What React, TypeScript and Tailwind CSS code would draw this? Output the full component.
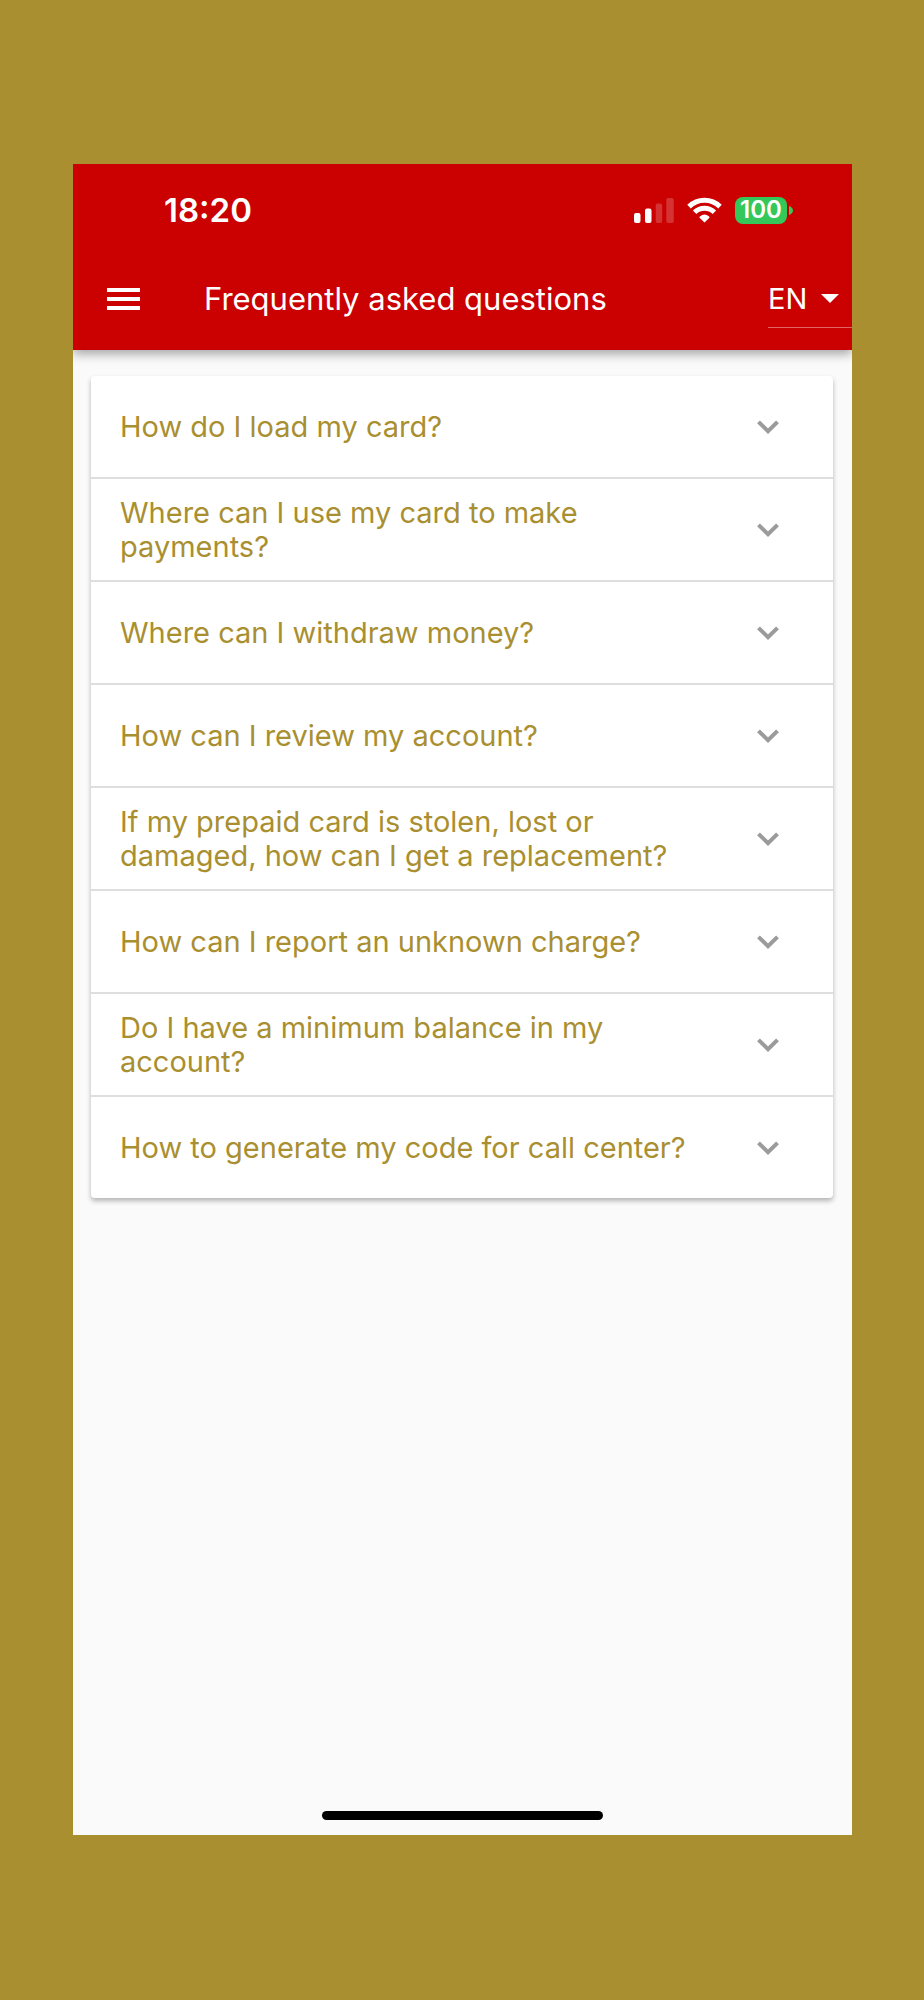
const questions = [
  'How do I load my card?',
  'Where can I use my card to make payments?',
  'Where can I withdraw money?',
  'How can I review my account?',
  'If my prepaid card is stolen, lost or damaged, how can I get a replacement?',
  'How can I report an unknown charge?',
  'Do I have a minimum balance in my account?',
  'How to generate my code for call center?',
];

function SignalIcon() {
  return (
    <svg width="40" height="25" viewBox="0 0 40 25" fill="#fff" aria-hidden="true">
      <rect x="0" y="15" width="6.5" height="10" rx="2" />
      <rect x="11" y="10.5" width="6.5" height="14.5" rx="2" />
      <rect x="21.7" y="5.5" width="6.5" height="19.5" rx="2" opacity="0.2" />
      <rect x="32.3" y="0" width="7.5" height="25" rx="2" opacity="0.2" />
    </svg>
  );
}

function WifiIcon() {
  return (
    <svg width="35" height="26" viewBox="0 0 35 26" aria-hidden="true">
      <g fill="none" stroke="#fff" strokeWidth="5">
        <path d="M2 9.600a22.200 22.200 0 0 1 31 0" />
        <path d="M7.600 15.300a14.200 14.200 0 0 1 19.800 0" />
      </g>
      <path
        d="M17.500 25.600 12.800 20.900c-.5-.5-.4-1 .1-1.400a7.200 7.200 0 0 1 9.200 0c.5.4.6.9.1 1.400Z"
        fill="#fff"
      />
    </svg>
  );
}

function Battery() {
  return (
    <div className="flex items-center gap-[2px]">
      <span className="flex h-[27px] w-[52px] items-center justify-center rounded-lg bg-[#34c759] text-[24px] leading-none font-semibold text-white">
        100
      </span>
      <svg width="4" height="9" viewBox="0 0 4 9" fill="#34c759" aria-hidden="true">
        <path d="M0 0c2.400.8 4 2.400 4 4.500S2.400 8.200 0 9Z" />
      </svg>
    </div>
  );
}

function Header() {
  return (
    <header className="bg-[#cb0000] pt-[26px] pb-[22px] text-white shadow-[0_4px_10px_rgba(0,0,0,0.35)]">
      <div className="flex h-10 items-center justify-between pr-[59px] pl-[91px]">
        <time className="text-[33px] leading-10 font-semibold">18:20</time>
        <div className="flex items-center gap-[13px]">
          <SignalIcon />
          <WifiIcon />
          <Battery />
        </div>
      </div>
      <div className="mt-10 flex h-[58px] items-center">
        <button type="button" aria-label="Open menu" className="ml-[34px] flex w-[33px] flex-col gap-[5px]">
          <span className="h-1 w-full bg-white" />
          <span className="h-1 w-full bg-white" />
          <span className="h-1 w-full bg-white" />
        </button>
        <h1 className="ml-16 flex-1 text-[31px] leading-[34px] font-normal">Frequently asked questions</h1>
        <div className="relative flex h-full w-[84px] items-center border-b border-white/40">
          <select
            aria-label="Language"
            defaultValue="EN"
            className="h-full w-full appearance-none bg-transparent text-[29px] text-white outline-none"
          >
            <option value="EN">EN</option>
            <option value="ES">ES</option>
          </select>
          <svg
            className="pointer-events-none absolute right-[13px]"
            width="18"
            height="9"
            viewBox="0 0 18 9"
            fill="#fff"
            aria-hidden="true"
          >
            <path d="M0 0h18L9 9Z" />
          </svg>
        </div>
      </div>
    </header>
  );
}

function Question({ text }: { text: string }) {
  return (
    <li className="border-b-2 border-[#dedede] last:border-b-0">
      <button
        type="button"
        aria-expanded="false"
        className="flex min-h-[101px] w-full items-center pr-[54px] pl-[29px] text-left"
      >
        <span className="flex-1 pr-[60px] text-[29px] leading-[34px] text-[#a98f30]">{text}</span>
        <svg width="22" height="14" viewBox="0 0 22 14" fill="none" aria-hidden="true">
          <path d="m1.500 1.800 9.500 9.400 9.500-9.400" stroke="#9b9b9b" strokeWidth="4" />
        </svg>
      </button>
    </li>
  );
}

export default function App() {
  return (
    <div className="flex min-h-screen flex-col bg-[#a98f30] pt-[164px] pr-[72px] pb-[165px] pl-[73px] font-['Inter',sans-serif]">
      <div className="flex flex-1 flex-col overflow-hidden bg-[#fafafa]">
        <Header />
        <main className="flex-1 pt-[26px] pr-[19px] pl-[18px]">
          <ul className="rounded bg-white shadow-[0_3px_5px_rgba(0,0,0,0.28)]">
            {questions.map((q) => (
              <Question key={q} text={q} />
            ))}
          </ul>
        </main>
        <div className="mx-auto mb-[15px] h-[9px] w-[36%] rounded-full bg-black" />
      </div>
    </div>
  );
}
